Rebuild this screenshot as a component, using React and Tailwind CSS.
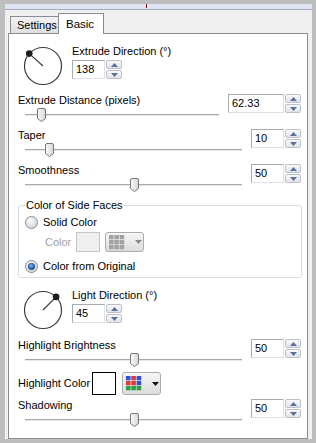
import React from 'react';

// little blue arrows of a spin control
const Arrow = ({ down }) => (
  <svg width="7" height="4" viewBox="0 0 7 4">
    <path d={down ? 'M0 0 L7 0 L3.5 4Z' : 'M3.5 0 L7 4 L0 4Z'} fill="#5670a6" />
  </svg>
);

const NumberBox = ({ value, width = 'w-[33px]' }) => (
  <div className="flex h-[19px]">
    <div
      className={`${width} flex items-center border border-[#a6abb3] border-b-[#dde1e7] border-r-[#dde1e7] bg-white pl-[3px] text-[11px] leading-none text-black`}
    >
      {value}
    </div>
    <div className="ml-[1px] flex w-[16px] flex-col gap-[1px]">
      <div className="flex flex-1 items-center justify-center rounded-[2px] border border-[#bcc1ca] bg-linear-to-b from-[#f9f9f9] to-[#e1e3e6]">
        <Arrow />
      </div>
      <div className="flex flex-1 items-center justify-center rounded-[2px] border border-[#bcc1ca] bg-linear-to-b from-[#f9f9f9] to-[#e1e3e6]">
        <Arrow down />
      </div>
    </div>
  </div>
);

const Thumb = () => (
  <svg width="9" height="14" viewBox="0 0 9 14">
    <defs>
      <linearGradient id="th" x1="0" y1="0" x2="1" y2="0">
        <stop offset="0" stopColor="#fbfbfb" />
        <stop offset="1" stopColor="#d6d6d6" />
      </linearGradient>
    </defs>
    <path
      d="M2 0.5 H7 Q8.5 0.5 8.5 2 V10.5 L4.5 13.5 L0.5 10.5 V2 Q0.5 0.5 2 0.5Z"
      fill="url(#th)"
      stroke="#767676"
    />
  </svg>
);

const Slider = ({ width, pos }) => (
  <div className="relative h-[16px]" style={{ width }}>
    <div className="absolute left-0 right-0 top-[7px] h-[2px] border-t border-[#a8a8a8] bg-[#e8e8e8]" />
    <div className="absolute top-[1px] flex" style={{ left: pos }}>
      <Thumb />
    </div>
  </div>
);

const SliderRow = ({ label, colWidth, trackWidth, pos, value, boxWidth, height = 'h-[35px]' }) => (
  <div className={`flex ${height} pl-[9px]`}>
    <div style={{ width: colWidth }}>
      <div className="h-[14px] leading-[14px]">{label}</div>
      <div className="ml-[7px]">
        <Slider width={trackWidth} pos={pos} />
      </div>
    </div>
    <div className="mt-[1px]">
      <NumberBox value={value} width={boxWidth} />
    </div>
  </div>
);

const Dial = ({ angle }) => {
  const r = 18.5;
  const a = (angle * Math.PI) / 180;
  const x = 20 + r * Math.cos(a);
  const y = 20 - r * Math.sin(a);
  return (
    <svg width="40" height="40" viewBox="0 0 40 40">
      <circle cx="20" cy="20" r={r} fill="none" stroke="#3a3a3a" strokeWidth="1.2" />
      <line x1="20" y1="20" x2={x} y2={y} stroke="#3a3a3a" strokeWidth="1.2" />
      <circle cx={x} cy={y} r="3.3" fill="#1e1e1e" />
    </svg>
  );
};

const DialSection = ({ angle, label, value, height }) => (
  <div className={`flex ${height} items-start pl-[14px] pt-[10px]`}>
    <div className="mt-[2px] flex">
      <Dial angle={angle} />
    </div>
    <div className="ml-[9px]">
      <div className="h-[14px] leading-[14px]">{label}</div>
      <div className="mt-[2px]">
        <NumberBox value={value} />
      </div>
    </div>
  </div>
);

const Radio = ({ checked }) => (
  <svg width="13" height="13" viewBox="0 0 13 13">
    <defs>
      <radialGradient id="rf" cx="0.4" cy="0.35" r="0.7">
        <stop offset="0" stopColor="#fafafa" />
        <stop offset="1" stopColor="#d2d4d8" />
      </radialGradient>
      <radialGradient id="rd" cx="0.4" cy="0.35" r="0.7">
        <stop offset="0" stopColor="#74b4f0" />
        <stop offset="1" stopColor="#0d4a98" />
      </radialGradient>
    </defs>
    <circle cx="6.5" cy="6.5" r="6" fill="url(#rf)" stroke="#8b8e92" />
    {checked && <circle cx="6.5" cy="6.5" r="3.3" fill="url(#rd)" stroke="#1d3f73" strokeWidth="0.6" />}
  </svg>
);

const GridIcon = ({ colors }) => (
  <svg width="16" height="15" viewBox="0 0 16 15">
    {colors.map((c, i) => (
      <rect key={i} x={(i % 3) * 5.3} y={Math.floor(i / 3) * 5} width="4.6" height="4.3" fill={c} />
    ))}
  </svg>
);

const ColorButton = ({ colors, arrow, height }) => (
  <div
    className={`flex ${height} w-[39px] items-center rounded-[3px] border border-[#a9acb1] bg-linear-to-b from-[#f6f6f6] to-[#dcdcdc] pl-[3px]`}
  >
    <GridIcon colors={colors} />
    <svg className="ml-[10px]" width="7" height="4" viewBox="0 0 7 4">
      <path d="M0 0 L7 0 L3.5 4Z" fill={arrow} />
    </svg>
  </div>
);

const grey = Array(9).fill('#a3a3a3');
const bright = [
  '#3550d8', '#e23a3a', '#3550d8',
  '#e23a3a', '#e23a3a', '#3550d8',
  '#2f9e44', '#2f9e44', '#2f9e44',
];

export default function App() {
  return (
    <div className="h-[443px] w-[316px] overflow-hidden bg-[#bebebe] pt-[4px] font-['Liberation_Sans',Arial,sans-serif] text-[11px] text-black">
      <div className="ml-[5px] w-[307px] bg-[#f0f0f0]">
        {/* top strip */}
        <div className="relative h-[6px] border-b border-[#a7adbf] bg-[#dfe4f3]">
          <div className="absolute left-[141px] top-0 h-[4px] w-[1px] bg-[#7a1020]" />
        </div>

        {/* tabs */}
        <div className="relative z-10 flex h-[23px] items-end pl-[5px]">
          <div className="flex h-[17px] w-[48px] items-center border border-r-0 border-b-0 border-[#898c95] bg-linear-to-b from-[#f2f2f2] to-[#e0e0e0] pl-[6px]">
            Settings
          </div>
          <div className="-mb-[1px] flex h-[21px] w-[46px] items-start border border-b-0 border-[#898c95] bg-white pl-[7px] pt-[2px] text-[11.5px]">
            Basic
          </div>
        </div>

        {/* panel */}
        <div className="ml-[3px] h-[406px] w-[300px] border border-[#898c95] bg-white">
          <DialSection angle={138} label="Extrude Direction (°)" value="138" height="h-[59px]" />

          <SliderRow
            label="Extrude Distance (pixels)"
            colWidth={210}
            trackWidth={194}
            pos={12}
            value="62.33"
            boxWidth="w-[56px]"
          />
          <SliderRow label="Taper" colWidth={233} trackWidth={217} pos={20} value="10" />
          <SliderRow label="Smoothness" colWidth={233} trackWidth={217} pos={105} value="50" />

          <fieldset className="ml-[9px] w-[284px] rounded-[3px] border border-[#d5dce3] pb-[3px] pl-[6px]">
            <legend className="h-[14px] px-[1px] leading-[14px]">Color of Side Faces</legend>
            <div className="mt-[2px] flex h-[16px] items-center gap-[5px]">
              <Radio />
              <span>Solid Color</span>
            </div>
            <div className="mt-[2px] flex items-center pl-[20px]">
              <span className="w-[31px] text-[#a0a0a0]">Color</span>
              <div className="h-[20px] w-[24px] border border-[#c4c7cc] bg-[#efefef]" />
              <div className="ml-[5px]">
                <ColorButton colors={grey} arrow="#8a8a8a" height="h-[20px]" />
              </div>
            </div>
            <div className="mt-[6px] flex h-[16px] items-center gap-[5px]">
              <Radio checked />
              <span>Color from Original</span>
            </div>
          </fieldset>

          <DialSection angle={45} label="Light Direction (°)" value="45" height="h-[60px]" />

          <SliderRow
            label="Highlight Brightness"
            colWidth={233}
            trackWidth={217}
            pos={105}
            value="50"
            height="h-[34px]"
          />

          <div className="flex h-[26px] items-start pl-[9px]">
            <div className="flex h-[23px] w-[74px] items-center">Highlight Color</div>
            <div className="h-[23px] w-[24px] border border-black bg-white" />
            <div className="ml-[6px]">
              <ColorButton colors={bright} arrow="#111" height="h-[23px]" />
            </div>
          </div>

          <SliderRow label="Shadowing" colWidth={233} trackWidth={217} pos={105} value="50" />
        </div>
      </div>
    </div>
  );
}
